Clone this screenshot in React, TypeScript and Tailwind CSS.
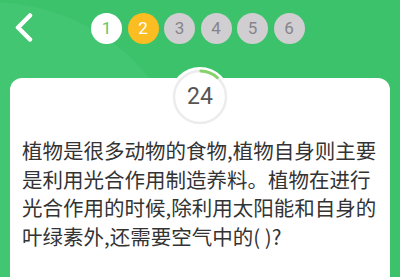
import React from 'react';

const steps = [1, 2, 3, 4, 5, 6];

function StepBubble({ n, current, done }: { n: number; current: number; done: boolean }) {
  const active = n === current;
  return (
    <div
      className={cn(
        'flex h-[31px] w-[31px] items-center justify-center rounded-full font-[Roboto,sans-serif] text-[17px]',
        done && 'bg-white text-[#5cc96a]',
        active && 'bg-[#fbbd22] text-white',
        !done && !active && 'bg-[#d0ced1] text-[#86848a]'
      )}
    >
      {n}
    </div>
  );
}

function Timer({ value }: { value: number }) {
  const r = 26;
  const c = 2 * Math.PI * r;
  return (
    <div className="absolute left-1/2 top-[-11px] flex h-[60px] w-[60px] -translate-x-1/2 items-center justify-center rounded-full bg-white">
      <svg width="58" height="58" viewBox="0 0 58 58" className="absolute inset-[1px]">
        <circle cx="29" cy="29" r={r} fill="none" stroke="#ececec" strokeWidth="2.5" />
        <circle
          cx="29"
          cy="29"
          r={r}
          fill="none"
          stroke="#86d36a"
          strokeWidth="3"
          strokeLinecap="round"
          strokeDasharray={`${c * 0.11} ${c}`}
          transform="rotate(-88 29 29)"
        />
      </svg>
      <span className="relative font-[Roboto,sans-serif] text-[23px] text-[#555]">{value}</span>
    </div>
  );
}

export default function App() {
  return (
    <div
      className="relative flex h-[277px] w-[400px] flex-col overflow-hidden bg-[#3bc26a]"
      style={{ fontFamily: '"Noto Sans CJK SC", "Noto Sans", Roboto, sans-serif' }}
    >
      <div className="pointer-events-none absolute left-[-215px] top-[2px] h-[410px] w-[410px] rounded-full bg-[#43c671]" />

      <div className="relative flex h-[78px] items-start pt-[13px]">
        <button className="ml-[14px] flex h-[29px] w-[20px] items-center justify-center">
          <svg width="20" height="29" viewBox="0 0 20 29">
            <path d="M16 2.5 L4 14.5 L16 26.5" fill="none" stroke="#fff" strokeWidth="4.5" strokeLinecap="round" strokeLinejoin="round" />
          </svg>
        </button>
        <div className="ml-[57px] flex gap-[5.5px]">
          {steps.map((n) => (
            <StepBubble key={n} n={n} current={2} done={n < 2} />
          ))}
        </div>
      </div>

      <div className="relative mx-[10px] flex-1 rounded-t-[12px] bg-white">
        <Timer value={24} />
        <p className="px-[12px] pt-[58px] text-[20.5px] leading-[28.5px] text-[#333]">
          植物是很多动物的食物,植物自身则主要是利用光合作用制造养料。植物在进行光合作用的时候,除利用太阳能和自身的叶绿素外,还需要空气中的( )?
        </p>
      </div>
    </div>
  );
}

function cn(...classes: any[]) {
  return classes.filter(Boolean).join(' ');
}
